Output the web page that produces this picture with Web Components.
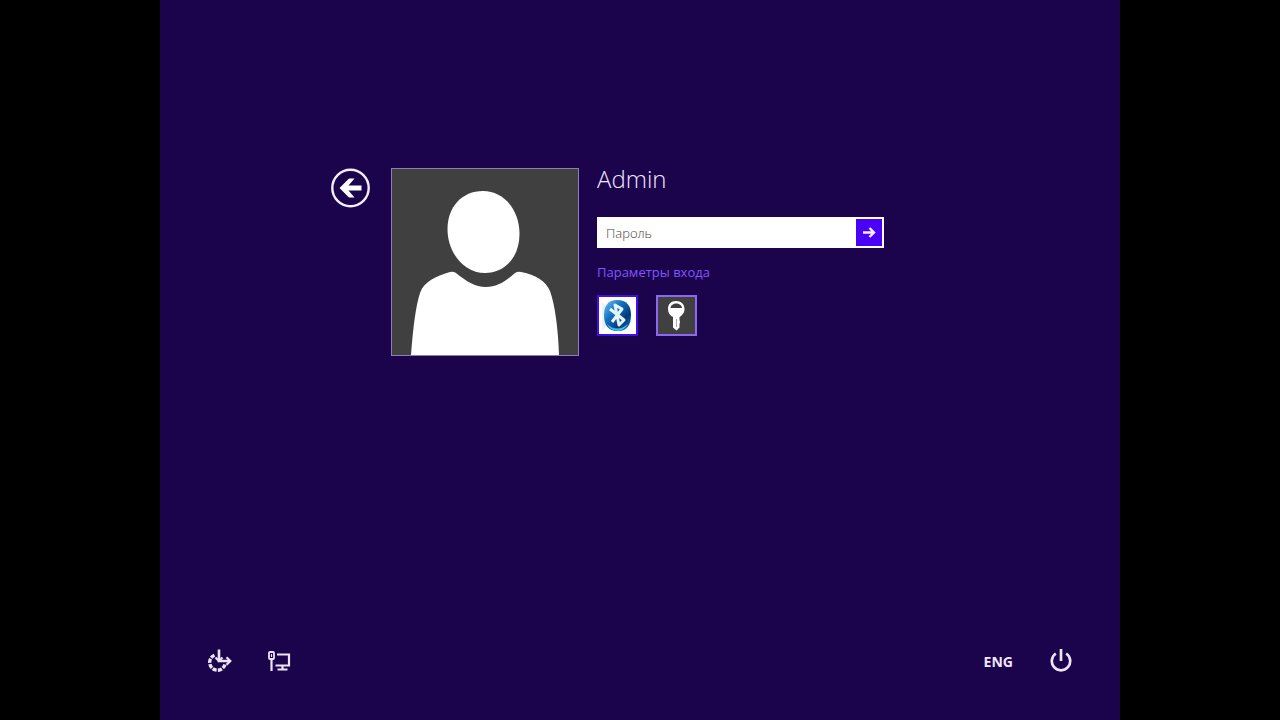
<!DOCTYPE html>
<html lang="ru">
<head>
<meta charset="utf-8">
<meta name="viewport" content="width=device-width, initial-scale=1">
<title>Admin</title>
<style>
  body {
    margin: 0;
    background: #000;
    color: #fff;
    font-family: "Open Sans", "Noto Sans", sans-serif;
  }
</style>
</head>
<body>
<logon-screen>
  <user-account name="Admin">
    <user-tile slot="picture"></user-tile>
    <password-box label="Пароль"></password-box>
    <signin-options label="Параметры входа"></signin-options>
  </user-account>
  <logon-bar slot="bar" lang-code="ENG"></logon-bar>
</logon-screen>

<script>
class LogonScreen extends HTMLElement {
  constructor() {
    super();
    this.attachShadow({ mode: "open" });
    this.shadowRoot.innerHTML = `
      <style>
        :host {
          display: flex;
          flex-direction: column;
          justify-content: space-between;
          box-sizing: border-box;
          min-height: 100vh;
          max-width: 133.333vh;
          margin: 0 auto;
          padding: 168px 48px 45px;
          background: #1b044b;
        }
        main { padding-left: 123px; }
      </style>
      <main><slot></slot></main>
      <slot name="bar"></slot>
    `;
  }
}

class UserAccount extends HTMLElement {
  constructor() {
    super();
    this.attachShadow({ mode: "open" });
  }

  connectedCallback() {
    this.shadowRoot.innerHTML = `
      <style>
        :host { display: flex; align-items: flex-start; }
        button {
          width: 40px;
          height: 40px;
          padding: 0;
          border: 0;
          background: none;
        }
        svg { display: block; }
        .picture { margin: 0 18px 0 20px; }
        h1 {
          margin: 0 0 27px;
          font-size: 24px;
          font-weight: 300;
          line-height: 22px;
          color: #f0e6ff;
        }
      </style>
      <button type="button" aria-label="Назад">
        <svg width="40" height="40" viewBox="0 0 40 40">
          <circle cx="19.5" cy="20" r="18.2" fill="none" stroke="#f4ecff" stroke-width="2.4"/>
          <path d="M8.500 20L18 10.500H23.500L17.500 17.500H30.500V22.500H17.500L23.500 29.500H18Z" fill="#fff"/>
        </svg>
      </button>
      <div class="picture"><slot name="picture"></slot></div>
      <div>
        <h1>${this.getAttribute("name")}</h1>
        <slot></slot>
      </div>
    `;
  }
}

class UserTile extends HTMLElement {
  constructor() {
    super();
    this.attachShadow({ mode: "open" });
    this.shadowRoot.innerHTML = `
      <style>
        :host { display: block; border: 1px solid #8d7fb5; background: #404040; }
        svg { display: block; }
      </style>
      <svg width="186" height="186" viewBox="0 0 186 186" fill="#fff" aria-hidden="true">
        <path d="M91 22C112 22 127.500 41 127.500 65C127.500 88 113 104 93 104C72 104 55.500 84 55.500 60C55.500 38 70 22 91 22Z"/>
        <path d="M19 186C21 158 24 136 28 124C32 112 45 107 58 103Q61 102 64 104C74 112 83 118 94 118C105 118 114 112 123 104Q126 102 129 103C142 105 154 112 158 122C163 136 166 159 167 186Z"/>
      </svg>
    `;
  }
}

class PasswordBox extends HTMLElement {
  constructor() {
    super();
    this.attachShadow({ mode: "open" });
  }

  connectedCallback() {
    const label = this.getAttribute("label");
    this.shadowRoot.innerHTML = `
      <style>
        :host { display: block; margin-bottom: 14px; }
        form {
          display: flex;
          box-sizing: border-box;
          width: 287px;
          max-width: 100%;
          height: 31px;
          padding: 2px;
          background: #fff;
        }
        input {
          flex: 1;
          min-width: 0;
          padding: 0 7px;
          border: 0;
          outline: 0;
          background: none;
          font: 300 13px "Open Sans", "Noto Sans", sans-serif;
        }
        input::placeholder { color: #444; opacity: 1; }
        button {
          display: grid;
          place-items: center;
          width: 26px;
          padding: 0;
          border: 0;
          background: #4a00f5;
        }
      </style>
      <form>
        <input id="password" type="password" aria-label="${label}" placeholder="${label}">
        <button type="button" aria-label="Войти">
          <svg width="14" height="12" viewBox="0 0 14 12" fill="none" stroke="#f4ecff" stroke-width="2.400">
            <path d="M1 5.500H12M7.500 1L12 5.500L7.500 10"/>
          </svg>
        </button>
      </form>
    `;
  }
}

class SigninOptions extends HTMLElement {
  constructor() {
    super();
    this.attachShadow({ mode: "open" });
  }

  connectedCallback() {
    this.shadowRoot.innerHTML = `
      <style>
        :host { display: block; }
        a {
          display: block;
          margin-bottom: 13px;
          color: #8355ff;
          font-size: 13px;
          line-height: 20px;
          text-decoration: none;
        }
        div { display: flex; gap: 18px; }
        button {
          width: 41px;
          height: 41px;
          padding: 0;
          border: 2px solid #8a68f5;
          background: #404040;
        }
        button.selected { border-color: #410ee6; background: #fff; }
        svg { display: block; }
      </style>
      <a href="#">${this.getAttribute("label")}</a>
      <div>
        <button type="button" class="selected" aria-label="Bluetooth">
          <svg width="37" height="37" viewBox="0 0 37 37">
            <defs>
              <linearGradient id="ball" x1="0" y1="0" x2="1" y2="1">
                <stop offset="0" stop-color="#75c5ef"/>
                <stop offset=".35" stop-color="#1677c4"/>
                <stop offset=".7" stop-color="#063779"/>
                <stop offset="1" stop-color="#1784cc"/>
              </linearGradient>
            </defs>
            <path d="M3 5L7 10V29L3 34Z" fill="#e4f3fb"/>
            <path d="M18 3C28 3 32 9 32 18C32 28 28 34 19 34C9 34 5 28 5 18C5 9 9 3 18 3Z" fill="url(#ball)"/>
            <path d="M8 27Q18 36 29 27Q25 34 19 34Q11 34 8 27Z" fill="#37c0ee"/>
            <path d="M11 12L25 23L20 28L16 8L23 12L13 25" fill="none" stroke="#e3f5ff" stroke-width="3" stroke-linejoin="round"/>
          </svg>
        </button>
        <button type="button" aria-label="Пароль">
          <svg width="37" height="37" viewBox="0 0 37 37">
            <path d="M18 4C23 4 26.500 7 26.500 12C26.500 16 24 18.500 21.500 20V23L22 25L21.500 27V30.500L18.500 33.500L15 30.500V20C12 18.500 10 16 10 12C10 7 13 4 18 4Z" fill="#fff"/>
            <path d="M12.500 11C13 5 23.500 5 24 11Z" fill="#404040"/>
            <path d="M18.500 22V30" stroke="#aaa" stroke-width="1"/>
          </svg>
        </button>
      </div>
    `;
  }
}

class LogonBar extends HTMLElement {
  constructor() {
    super();
    this.attachShadow({ mode: "open" });
  }

  connectedCallback() {
    this.shadowRoot.innerHTML = `
      <style>
        :host { display: flex; justify-content: space-between; }
        div { display: flex; align-items: center; gap: 35px; }
        button {
          padding: 0;
          border: 0;
          background: none;
          color: #f0e6ff;
          font: 700 14px/26px "Open Sans", "Noto Sans", sans-serif;
        }
        svg { display: block; fill: none; stroke: #eee4fa; }
      </style>
      <div>
        <button type="button" aria-label="Специальные возможности">
          <svg width="24" height="26" viewBox="0 0 24 26">
            <path d="M6.500 6.200A7.800 7.800 0 1 0 17 15.500" stroke-width="3.400" stroke-dasharray="4.200 1.200"/>
            <path d="M11 .5V12H22" stroke-width="2.600"/>
            <path d="M7.500 8.500L11 12L14.500 8.500M18.500 8.300L22.300 12L18.500 15.700" stroke-width="2.200"/>
          </svg>
        </button>
        <button type="button" aria-label="Сеть">
          <svg width="24" height="26" viewBox="0 0 24 26">
            <path d="M10 5.500H22V16.500H8.500M15.500 16.500V20.500M10.500 20.500H20.500" stroke-width="2.200"/>
            <path d="M4.500 10V22" stroke-width="2.200"/>
            <rect x="2" y="3" width="5" height="7" rx="1" stroke-width="1.800"/>
            <path d="M4.500 5V8" stroke-width="1.200"/>
          </svg>
        </button>
      </div>
      <div>
        <button type="button" aria-label="Язык ввода">${this.getAttribute("lang-code")}</button>
        <button type="button" aria-label="Выключение">
          <svg width="24" height="26" viewBox="0 0 24 26">
            <path d="M7.800 4.500A9.200 9.200 0 1 0 18.200 4.500M13 0V12" stroke-width="2.700"/>
          </svg>
        </button>
      </div>
    `;
  }
}

customElements.define("logon-screen", LogonScreen);
customElements.define("user-account", UserAccount);
customElements.define("user-tile", UserTile);
customElements.define("password-box", PasswordBox);
customElements.define("signin-options", SigninOptions);
customElements.define("logon-bar", LogonBar);
</script>
</body>
</html>
